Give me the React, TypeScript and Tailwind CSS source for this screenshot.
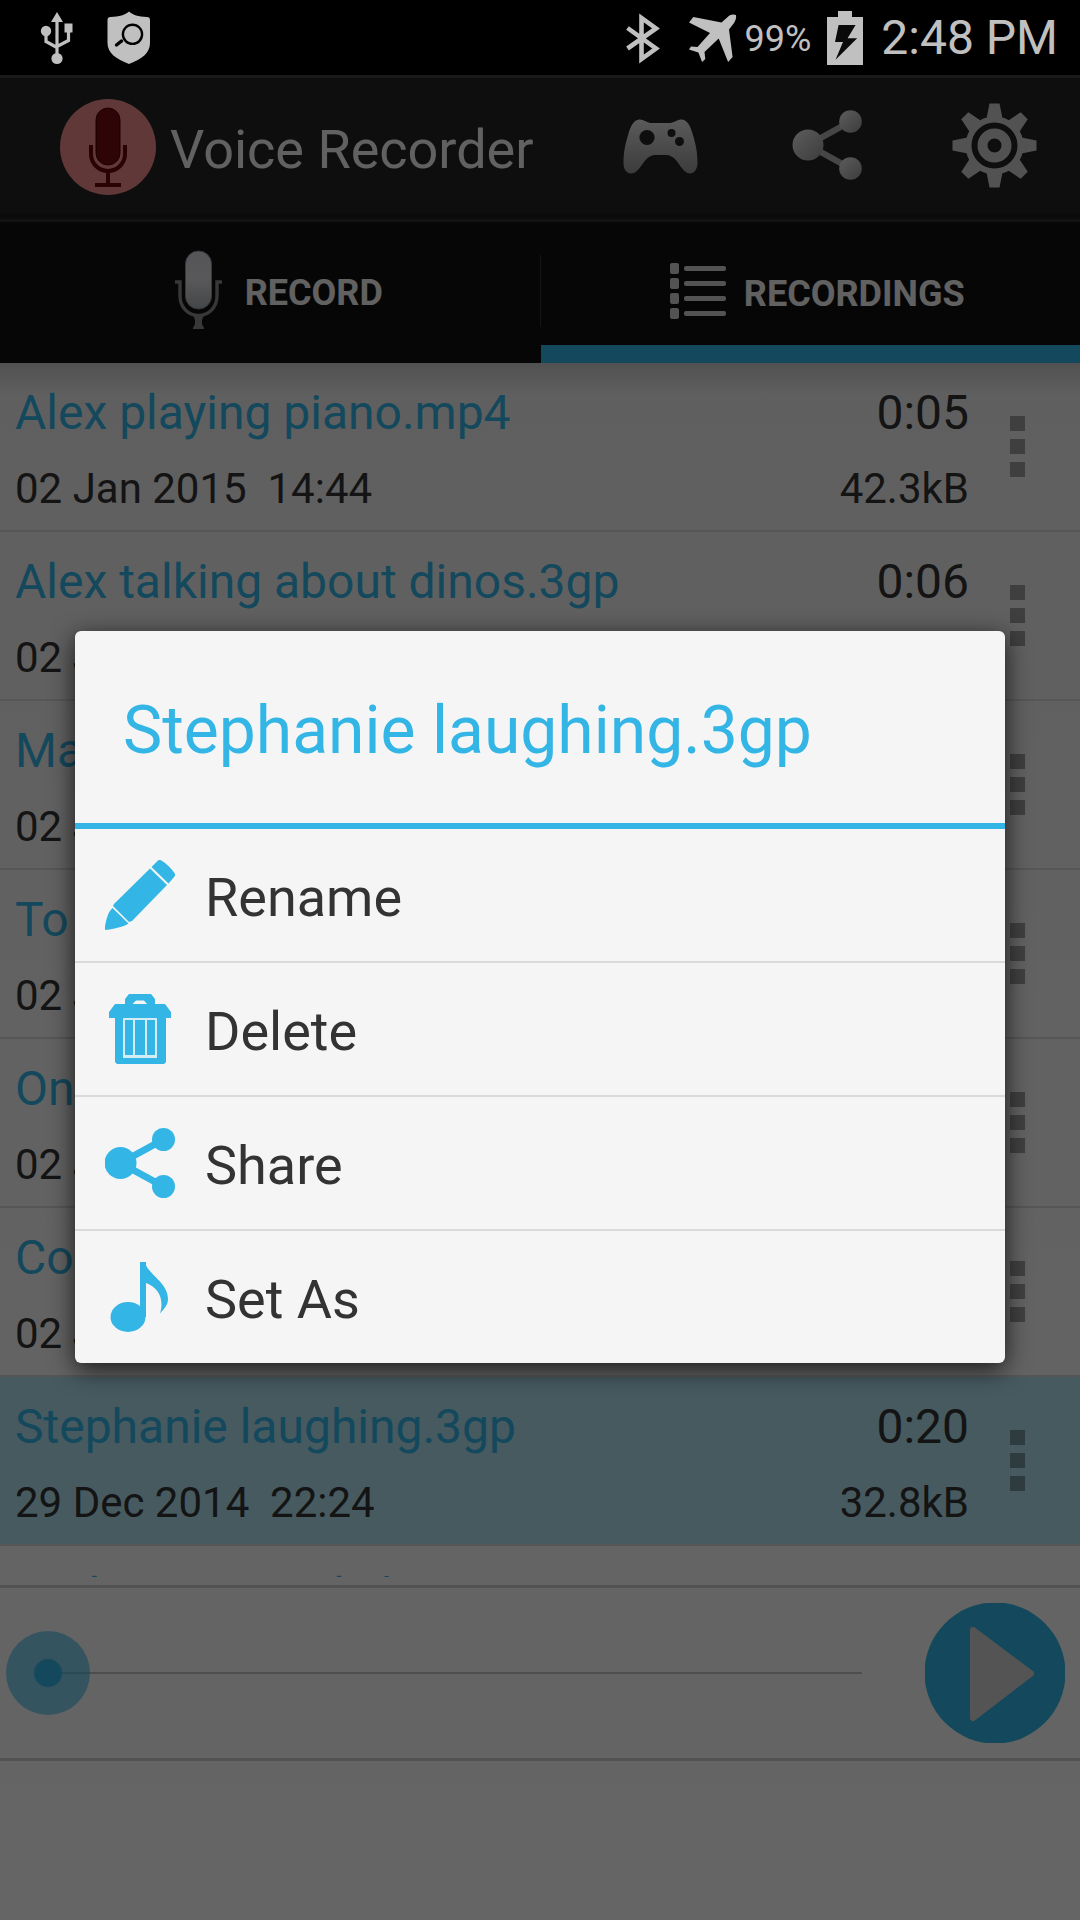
import React, { useState } from 'react';

type Recording = {
  name: string;
  date: string;
  time: string;
  length: string;
  size: string;
};

const RECORDINGS: Recording[] = [
  { name: 'Alex playing piano.mp4', date: '02 Jan 2015', time: '14:44', length: '0:05', size: '42.3kB' },
  { name: 'Alex talking about dinos.3gp', date: '02 Jan 2015', time: '14:43', length: '0:06', size: '12.1kB' },
  { name: 'Max singing.3gp', date: '02 Jan 2015', time: '14:41', length: '0:12', size: '20.4kB' },
  { name: 'To do list.3gp', date: '02 Jan 2015', time: '14:40', length: '0:31', size: '50.2kB' },
  { name: 'One two three.3gp', date: '02 Jan 2015', time: '14:38', length: '0:04', size: '8.6kB' },
  { name: 'Conversation.3gp', date: '02 Jan 2015', time: '14:35', length: '1:02', size: '98.7kB' },
  { name: 'Stephanie laughing.3gp', date: '29 Dec 2014', time: '22:24', length: '0:20', size: '32.8kB' },
  { name: 'Carl serving a dish.3gp', date: '29 Dec 2014', time: '22:20', length: '0:18', size: '29.9kB' },
];

const SELECTED = 'Stephanie laughing.3gp';

const GEAR_ANGLES = [0, 45, 90, 135, 180, 225, 270, 315];

function UsbIcon() {
  return (
    <svg viewBox="40 11 34 54" className="w-[34px] h-[54px]" fill="#c0c0c0">
      <path d="M57 12l6 10H51z" />
      <path d="M57 20v36M46 33v8.500l11 6M68.500 30v10.500L57 46.500" fill="none" stroke="#c0c0c0" strokeWidth="3.200" />
      <circle cx="46" cy="31" r="5.200" />
      <rect x="64.500" y="23.500" width="8" height="9" />
      <circle cx="57" cy="58.500" r="5.600" />
    </svg>
  );
}

function ShieldIcon() {
  return (
    <svg viewBox="107 11 44 54" className="w-[44px] h-[54px]">
      <path
        d="M129 11.500c4 3.500 9 5 18 5.500 2 0 3 1 3 3v23c0 10-8 16-21 21-13-5-21.500-11-21.500-21V20c0-2 1-3 3-3 9-.5 14.500-2 18.500-5.500z"
        fill="#c0c0c0"
      />
      <circle cx="132.500" cy="34.300" r="9.600" fill="none" stroke="#000" strokeWidth="2.400" />
      <path d="M121.500 41l-5 4" stroke="#000" strokeWidth="3.400" strokeLinecap="round" />
    </svg>
  );
}

function BluetoothIcon() {
  return (
    <svg viewBox="627 11 35 52" className="w-[35px] h-[52px]" fill="none" stroke="#c0c0c0" strokeWidth="4.600">
      <path d="M629.500 27L658 47.500l-14.500 10.500V17L658 27.500 629.500 47.500" />
    </svg>
  );
}

function PlaneIcon() {
  return (
    <svg viewBox="689 12 49 50" className="w-[49px] h-[50px]" fill="#c0c0c0">
      <path d="M737 14c.5 3-.5 5.500-2 8l-5 6.500 3.600 27.500-4.500 5-9.400-23.500L705.500 51l.8 7-3.200 3-3.700-9.500L690 48.500l2-3 6.500.6L711 32l-21-10.500 4.300-5.500 28.200 5.500 7.900-7c2-1.200 4.600-1.500 6.600-.5z" />
    </svg>
  );
}

function BatteryIcon() {
  return (
    <svg viewBox="827 9 36 54" className="w-[36px] h-[54px]">
      <path d="M838 9h14v6h11v48h-36V15h11z" fill="#c0c0c0" />
      <path d="M838.600 23h17l-8 13.300h9.600L835.500 57.700l7.500-17.700h-8z" fill="#0a0a0a" />
    </svg>
  );
}

function AppIcon() {
  return (
    <svg viewBox="0 -1 96 96" className="w-[96px] h-[96px] overflow-visible">
      <circle cx="48" cy="48" r="48" fill="#f08c8c" />
      <rect x="36" y="9" width="24" height="57" rx="12" fill="#730a0f" stroke="#4a0000" />
      <path d="M31 46v9a17 17 0 0 0 34 0v-9M48 72v13M35 86h26" fill="none" stroke="#6b060a" strokeWidth="4" />
    </svg>
  );
}

function GamepadIcon() {
  return (
    <svg viewBox="0 0 96 96" className="w-[96px] h-[96px]">
      <defs>
        <linearGradient id="pad" x1="0" y1="0" x2="0" y2="1">
          <stop offset="0" stopColor="#e2e2e2" />
          <stop offset="1" stopColor="#969696" />
        </linearGradient>
      </defs>
      <path
        d="M27 21.500c4-.8 8 3.500 13 3.500h17c5 0 9-4.300 13-3.500 5 .8 8 5.500 10.500 14C83 44 85.500 52 85.500 65c0 6-3 10-7 10.500-10 0-12-18-24-18.500H43c-12 .5-14 18.500-24 18.500-5-.5-7.500-4.500-7.500-10.500 0-13 2.500-21 5-29.500 2.500-8.500 5.500-13.200 10.500-14z"
        fill="url(#pad)"
      />
      <circle cx="35" cy="39.500" r="7.600" fill="#232323" />
      <circle cx="59.500" cy="35" r="4" fill="#232323" />
      <circle cx="67.500" cy="43.500" r="4.500" fill="#232323" />
    </svg>
  );
}

function HeaderShareIcon() {
  return (
    <svg viewBox="0 0 96 96" className="w-[96px] h-[96px]">
      <defs>
        <linearGradient id="node" x1="0" y1="0" x2="1" y2="1">
          <stop offset="0" stopColor="#e8e8e8" />
          <stop offset="1" stopColor="#969696" />
        </linearGradient>
      </defs>
      <path d="M70.500 23.500L28 47l42.500 23.500" fill="none" stroke="#b0b0b0" strokeWidth="6" />
      <circle cx="28" cy="47" r="15.500" fill="url(#node)" />
      <circle cx="70.500" cy="23.500" r="11.300" fill="url(#node)" />
      <circle cx="70.500" cy="70.500" r="11.300" fill="url(#node)" />
    </svg>
  );
}

function GearIcon() {
  return (
    <svg viewBox="0 0 96 96" className="w-[96px] h-[96px]">
      <g fill="#cdcdcd">
        {GEAR_ANGLES.map(angle => (
          <path key={angle} d="M41.500 5.500h10L55 23H38z" transform={`rotate(${angle} 46.500 47.500)`} />
        ))}
      </g>
      <circle cx="46.500" cy="47.500" r="26" fill="none" stroke="#cdcdcd" strokeWidth="6" />
      <circle cx="46.500" cy="47.500" r="12" fill="none" stroke="#cdcdcd" strokeWidth="10" />
    </svg>
  );
}

function MicIcon() {
  return (
    <svg viewBox="0 0 96 96" className="w-[96px] h-[96px]">
      <defs>
        <linearGradient id="mic" x1="0" y1="0" x2="0" y2="1">
          <stop offset="0" stopColor="#d6d6dc" />
          <stop offset="0.5" stopColor="#dcdce0" />
          <stop offset="1" stopColor="#a8b0b0" />
        </linearGradient>
      </defs>
      <rect x="34.500" y="8" width="26" height="58" rx="13" fill="url(#mic)" stroke="#8c8ca0" />
      <path d="M24 39h5v14c0 11 8 19.500 18.500 19.500S66 64 66 53V39h5" fill="none" stroke="#8c8c8c" strokeWidth="3.400" />
      <path d="M42 72h11l-2 5v4l2 4v1H42v-1l2-4v-4z" fill="#8c8c8c" />
    </svg>
  );
}

function ListIcon() {
  return (
    <svg viewBox="0 0 96 96" className="w-[96px] h-[96px]" fill="#cfcfcf">
      {[13, 28, 43, 58].map(y => (
        <g key={y}>
          <rect x="20" y={y + 6} width="9" height="11" rx="2" />
          <rect x="34" y={y + 9} width="42" height="5" rx="2" />
        </g>
      ))}
    </svg>
  );
}

function PencilIcon() {
  return (
    <svg viewBox="0 0 70 70" className="w-[70px] h-[70px]" fill="#33b5e5">
      <path d="M46.500 7L53 .5c1-.7 2.500-.7 3.500 0C62 4 66 8 69.500 13c.7 1.200.7 2.500 0 3.500L63.500 23.500z" />
      <path d="M45 8.500L62 25 27 61l-3 1L8 46l1-2z" />
      <path d="M7.500 48L23.500 63.500c-5 3.500-12 4.500-19 6L0 70v-4C1.500 59 3 52 7.500 48z" />
    </svg>
  );
}

function TrashIcon() {
  return (
    <svg viewBox="0 0 70 70" className="w-[70px] h-[70px]" fill="#33b5e5">
      <path
        fillRule="evenodd"
        d="M24 0h22l4 5v5h10l6 8v6h-5v44l-2 2H12l-2-2V24H4v-6l6-8h10V5zM27.500 10h14.500l-3-3.500H31z"
      />
      <path d="M18 24h34v40H18z" fill="#d3edf7" />
      <path d="M20 26h8v35h-8zM30 26h10v35H30zM42 26h8v35h-8z" />
    </svg>
  );
}

function ShareIcon() {
  return (
    <svg viewBox="0 0 70 70" className="w-[70px] h-[70px]" fill="#33b5e5">
      <path d="M58.500 11.500L15.500 35l43 23.500" fill="none" stroke="#33b5e5" strokeWidth="7" />
      <circle cx="15.500" cy="35" r="16" />
      <circle cx="58.500" cy="11.500" r="11.500" />
      <circle cx="58.500" cy="58.500" r="11.500" />
    </svg>
  );
}

function NoteIcon() {
  return (
    <svg viewBox="0 0 70 70" className="w-[70px] h-[70px]" fill="#33b5e5">
      <ellipse cx="23" cy="55" rx="17.500" ry="15" />
      <path d="M35 0h6v55h-6z" />
      <path d="M40 0c2 12 23 20 23 37 0 6-4 10-8 14.500C59 38 55 26 40 20.500z" />
    </svg>
  );
}

const ACTIONS = [
  { label: 'Rename', Icon: PencilIcon },
  { label: 'Delete', Icon: TrashIcon },
  { label: 'Share', Icon: ShareIcon },
  { label: 'Set As', Icon: NoteIcon },
];

function StatusBar() {
  return (
    <div className="shrink-0 h-[75px] bg-black text-[#c0c0c0] flex items-center justify-between pl-10 pr-[22px]">
      <div className="flex items-center gap-[33px]">
        <UsbIcon />
        <ShieldIcon />
      </div>
      <div className="flex items-center">
        <BluetoothIcon />
        <div className="flex items-center gap-2 ml-7">
          <PlaneIcon />
          <span className="pt-[3px] text-[36px] leading-none">99%</span>
        </div>
        <div className="flex items-center gap-[18px] ml-4">
          <BatteryIcon />
          <span className="text-[48px] leading-none">2:48 PM</span>
        </div>
      </div>
    </div>
  );
}

function Header() {
  return (
    <header className="shrink-0 flex items-center h-[138px] pl-[60px] bg-[#232323] border-t-3 border-[#414141]">
      <AppIcon />
      <h1 className="flex-1 pl-[14px] pt-2 text-[54px] leading-none text-[#f3f3f3]">Voice Recorder</h1>
      <button aria-label="Games" className="w-[168px] flex justify-center">
        <GamepadIcon />
      </button>
      <button aria-label="Share app" className="w-[168px] flex justify-center">
        <HeaderShareIcon />
      </button>
      <button aria-label="Settings" className="w-[168px] flex justify-center">
        <GearIcon />
      </button>
    </header>
  );
}

function Tabs() {
  return (
    <nav className="shrink-0 bg-[#0f0f0f] text-[#f3f3f3] text-[36px] font-bold leading-none">
      <div className="h-[9px] bg-[#1c1c1c] border-b-3 border-[#2d2d2d]" />
      <div className="flex h-[141px]">
        <button className="flex-1 flex items-center justify-center pb-1 pr-[6px]">
          <MicIcon />
          <span className="pt-1 -ml-[2px]">RECORD</span>
        </button>
        <div className="w-px h-[72px] mt-[33px] bg-[#333333]" />
        <button className="flex-1 flex items-center justify-center pr-[6px] border-b-18 border-[#33b5e5]">
          <span className="pt-4"><ListIcon /></span>
          <span className="pt-5 -ml-[2px]">RECORDINGS</span>
        </button>
      </div>
    </nav>
  );
}

function RecordingRow({ item, selected }: { item: Recording; selected: boolean }) {
  return (
    <li className={`flex items-center pl-[15px] pr-[15px] border-b-2 border-[#d8d8d8] ${selected ? 'bg-[#afe1f0]' : ''}`}>
      <div className="flex-1 pt-[22px] pb-4 text-[#333333]">
        <div className="flex justify-between text-[48px] leading-[56px]">
          <span className="text-[#33b5e5]">{item.name}</span>
          <span>{item.length}</span>
        </div>
        <div className="flex justify-between mt-[23px] text-[42px] leading-[50px]">
          <span className="whitespace-pre">{`${item.date}  ${item.time}`}</span>
          <span>{item.size}</span>
        </div>
      </div>
      <button aria-label={`Options for ${item.name}`} className="w-24 flex flex-col items-center gap-2">
        <span className="size-[15px] bg-black/34" />
        <span className="size-[15px] bg-black/34" />
        <span className="size-[15px] bg-black/34" />
      </button>
    </li>
  );
}

function Player() {
  const [position, setPosition] = useState(0);

  return (
    <div className="shrink-0 flex items-center gap-[21px] h-[176px] pl-[6px] pr-[15px] border-y-3 border-[#cecece]">
      <div className="relative flex-1 h-[84px]">
        <div className="absolute inset-x-[42px] top-[41px] h-[2px] bg-[#c2c2c2]" />
        <input
          type="range"
          aria-label="Playback position"
          min={0}
          max={100}
          value={position}
          onChange={e => setPosition(Number(e.target.value))}
          className="relative block w-full h-[84px] appearance-none bg-transparent [&::-webkit-slider-thumb]:appearance-none [&::-webkit-slider-thumb]:size-[84px] [&::-webkit-slider-thumb]:rounded-full [&::-webkit-slider-thumb]:bg-[radial-gradient(circle,#33b5e5_13px,rgba(51,181,229,0.6)_15px)]"
        />
      </div>
      <button aria-label="Play" className="shrink-0">
        <svg viewBox="0 0 140 140" className="w-[140px] h-[140px]">
          <circle cx="70" cy="70" r="70.500" fill="#33b5e5" />
          <path d="M48 27L106 70.500 48 115z" fill="#d2d2d2" stroke="#d2d2d2" strokeWidth="6" strokeLinejoin="round" />
        </svg>
      </button>
    </div>
  );
}

function OptionsDialog() {
  return (
    <div className="absolute inset-0 flex items-center justify-center px-[75px] pb-[2px] bg-black/60">
      <div
        role="dialog"
        aria-labelledby="dialog-title"
        className="w-full bg-[#f5f5f5] rounded-md shadow-[0_6px_24px_rgba(0,0,0,0.75)]"
      >
        <h2
          id="dialog-title"
          className="flex items-center h-[198px] px-12 pt-2 border-b-6 border-[#33b5e5] text-[66px] leading-none text-[#33b5e5]"
        >
          {SELECTED}
        </h2>
        <ul className="divide-y-2 divide-[#dadada]">
          {ACTIONS.map(({ label, Icon }) => (
            <li key={label}>
              <button className="flex items-center gap-[30px] w-full h-[132px] pl-[30px] text-[54px] leading-none text-[#333333]">
                <Icon />
                <span className="pt-[6px]">{label}</span>
              </button>
            </li>
          ))}
        </ul>
      </div>
    </div>
  );
}

export default function App() {
  return (
    <div className="flex flex-col h-screen font-[Roboto,sans-serif]">
      <StatusBar />
      <main className="relative flex-1 min-h-0 flex flex-col bg-linear-to-b from-[#ebebeb] to-[#fdfdfd]">
        <Header />
        <Tabs />
        <div className="relative flex-1 min-h-0 overflow-hidden">
          <ul>
            {RECORDINGS.map(item => (
              <RecordingRow key={item.name} item={item} selected={item.name === SELECTED} />
            ))}
          </ul>
          <div className="absolute inset-x-0 top-0 h-8 bg-linear-to-b from-black/15 to-transparent" />
        </div>
        <div className="shrink-0 pt-2 pb-[159px]">
          <Player />
        </div>
        <OptionsDialog />
      </main>
    </div>
  );
}
